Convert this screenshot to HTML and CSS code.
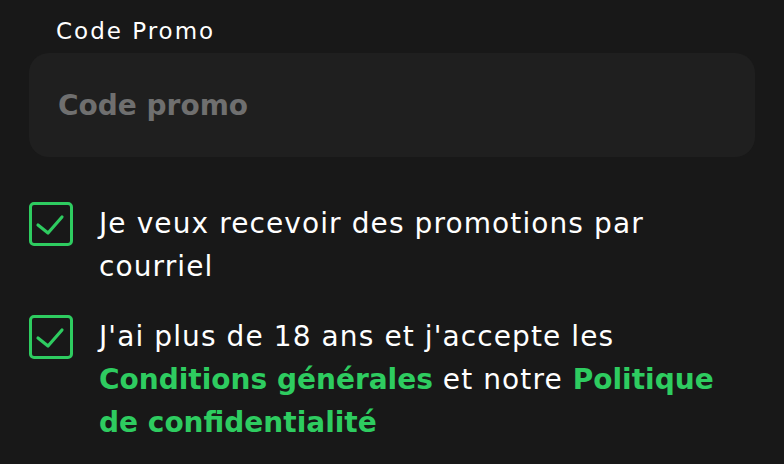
FILE: index.html
```html
<!DOCTYPE html>
<html lang="fr">
<head>
<meta charset="utf-8">
<link rel="stylesheet" href="styles.css">
</head>
<body>
<div class="form">
  <label class="field-label" for="promo">Code Promo</label>
  <div class="input-box"><input id="promo" class="input" type="text" placeholder="Code promo"></div>
  <div class="check-row first">
    <span class="checkbox"><svg viewBox="0 0 44 44" width="44" height="44"><path d="M9 23 L19 31 L33 15" fill="none" stroke="#2ecc60" stroke-width="3.2" stroke-linecap="round" stroke-linejoin="round"/></svg></span>
    <p class="check-text">Je veux recevoir des promotions par courriel</p>
  </div>
  <div class="check-row">
    <span class="checkbox"><svg viewBox="0 0 44 44" width="44" height="44"><path d="M9 23 L19 31 L33 15" fill="none" stroke="#2ecc60" stroke-width="3.2" stroke-linecap="round" stroke-linejoin="round"/></svg></span>
    <p class="check-text">J'ai plus de 18 ans et j'accepte les <a class="link">Conditions générales</a> et notre <a class="link">Politique de confidentialité</a></p>
  </div>
</div>
</body>
</html>
```
FILE: styles.css
```css
html, body {
  margin: 0;
  padding: 0;
  background: #181818;
  width: 784px;
  height: 464px;
  overflow: hidden;
  font-family: "DejaVu Sans", "Noto Sans", sans-serif;
  color: #ffffff;
}
.form {
  padding: 14px 29px 0 29px;
  display: flex;
  flex-direction: column;
}
.field-label {
  display: block;
  margin-left: 27px;
  font-size: 23px;
  letter-spacing: 2px;
  line-height: 34px;
  color: #ffffff;
}
.input-box {
  margin-top: 5px;
  height: 104px;
  background: #1f1f1f;
  border-radius: 20px;
  display: flex;
  align-items: center;
}
.input {
  background: transparent;
  border: none;
  outline: none;
  width: 100%;
  padding: 0 29px;
  font-family: inherit;
  font-size: 28px;
  font-weight: 700;
  color: #ffffff;
}
.input::placeholder {
  color: #6f6f6f;
}
.check-row {
  display: flex;
  align-items: flex-start;
  gap: 26px;
  margin-top: 27px;
}
.check-row.first {
  margin-top: 45px;
}
.checkbox {
  flex: 0 0 auto;
  width: 44px;
  height: 44px;
  box-sizing: border-box;
  border: 3px solid #2ecc60;
  border-radius: 5px;
  position: relative;
  display: block;
}
.checkbox svg {
  position: absolute;
  left: -3px;
  top: -3px;
}
.check-text {
  margin: 0;
  font-size: 28px;
  letter-spacing: 1.1px;
  line-height: 43px;
  color: #ffffff;
  max-width: 640px;
}
.link {
  color: #2ecc60;
  font-weight: 700;
  letter-spacing: 0;
  text-decoration: none;
}
```
